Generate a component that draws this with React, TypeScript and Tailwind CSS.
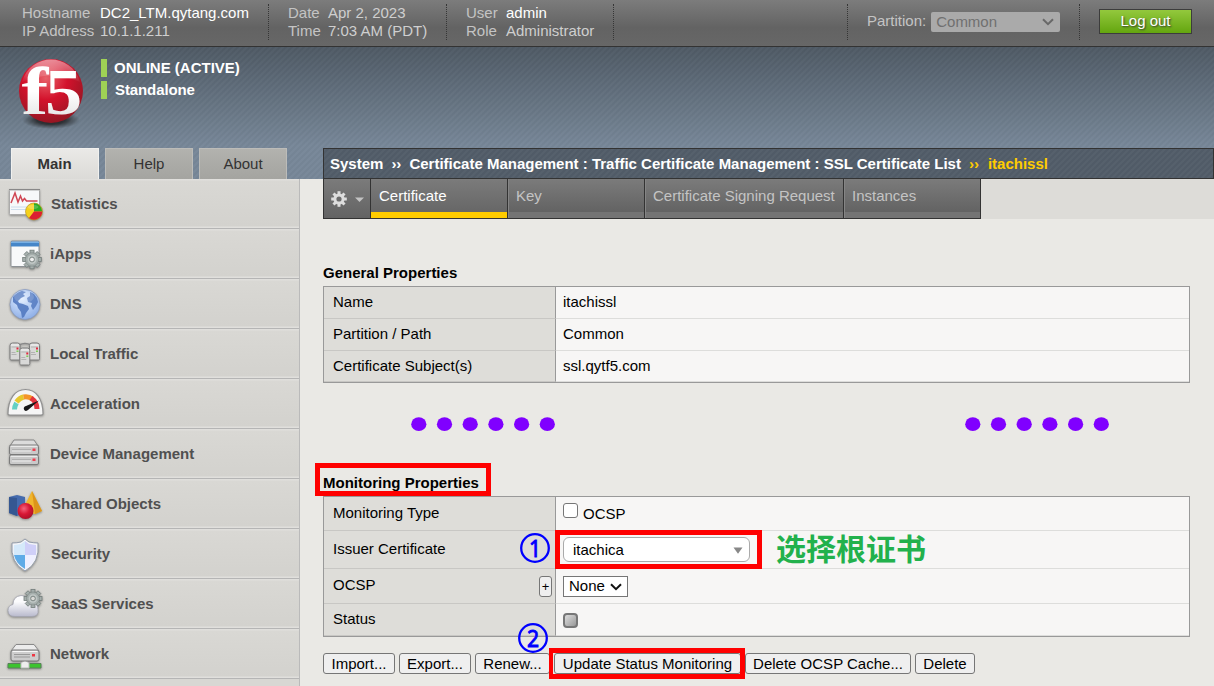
import React from "react";

const Gear = ({ cx, cy, r, fill = "#a5aeac", stroke = "#737d7b", hole = "#d9d9d6" }: { cx: number; cy: number; r: number; fill?: string; stroke?: string; hole?: string }) => (
  <g>
    {[0, 45, 90, 135].map((a) => (
      <rect key={a} x={cx - r * 0.22} y={cy - r} width={r * 0.44} height={r * 2} fill={fill} stroke={stroke} strokeWidth="0.8" transform={`rotate(${a} ${cx} ${cy})`} />
    ))}
    <circle cx={cx} cy={cy} r={r * 0.72} fill={fill} stroke={stroke} strokeWidth="0.5" />
    <circle cx={cx} cy={cy} r={r * 0.48} fill="#c0c7c5" />
    <circle cx={cx} cy={cy} r={r * 0.26} fill={hole} stroke={stroke} strokeWidth="0.9" />
  </g>
);

const Server = ({ x, y }: { x: number; y: number }) => (
  <g>
    <path d={`M${x + 0.5} ${y + 16}V${y + 3}q0-2.500 2.500-2.500h5q2.500 0 2.500 2.500v13q0 1.500-1 1.500h-8q-1 0-1-1.500z`} fill="#d9d9d8" stroke="#7c7c7c" />
    <path d={`M${x + 2} ${y + 4.5}h7M${x + 2} ${y + 10}h4M${x + 2} ${y + 12}h5`} stroke="#aaa" strokeWidth="0.8" />
    <path d={`M${x + 1.5} ${y + 2.5}h8`} stroke="#f4f4f4" />
    <rect x={x + 7} y={y + 5} width="2" height="2" fill="#e4283c" />
    <rect x={x + 7} y={y + 8} width="2" height="1.500" fill="#7ecb5b" />
  </g>
);

const Rack = ({ y }: { y: number }) => (
  <g>
    <rect x="9.500" y={y} width="29" height="9.500" rx="1.500" fill="#c9c9c9" stroke="#7b7b7b" />
    <path d={`M11 ${y + 1.3}h26`} stroke="#f2f2f2" />
    <path d={`M12 ${y + 4.7}h19`} stroke="#aaa" />
    <path d={`M12 ${y + 6}h19`} stroke="#eee" />
    <rect x="32.500" y={y + 3.5} width="3" height="2.500" fill="#ee4050" />
  </g>
);

const icons: Record<string, React.ReactNode> = {
  Statistics: (
    <>
      <rect x="9.500" y="11" width="30" height="24.500" rx="1" fill="#f7f8fa" stroke="#aaa" />
      <path d="M9 10.500h31" stroke="#888" />
      <path d="M11 28h28M11 30.500h28" stroke="#cbdcec" />
      <path d="M11 24l4-10 3 9 2.500-6 2 5 2-2.500 2 2.500h11" fill="none" stroke="#d04654" strokeWidth="1.500" />
      <circle cx="34" cy="32.500" r="8.500" fill="#f5d11b" stroke="#a98822" strokeWidth="0.6" />
      <path d="M34 32.500V24.300a8.200 8.200 0 0 1 8.200 8.200z" fill="#2cab24" />
      <path d="M34 32.500h8.200a8.200 8.200 0 0 1-13.200 6.500z" fill="#db1f31" />
      <ellipse cx="33" cy="28" rx="5.500" ry="2.200" fill="#fff" opacity="0.2" />
    </>
  ),
  iApps: (
    <>
      <rect x="11" y="12" width="28" height="25.500" rx="1" fill="#f8f9fa" stroke="#8d9296" />
      <path d="M11 12.500h28v5H11z" fill="#4686c8" />
      <path d="M11 13.500h28" stroke="#78b0e4" />
      <Gear cx={32} cy={30.500} r={9.300} hole="#eee" />
    </>
  ),
  DNS: (
    <>
      <circle cx="25" cy="25.500" r="15" fill="url(#globe)" stroke="#8598be" strokeWidth="0.8" />
      <path d="M13 18q4-5 9-6l4 1-3 2 2 2-4 2-3 3 1 2 4 1 5 2 1 3-3 4-2 4-2 1-1-6-3-4-1-3-4-3z" fill="#5279c0" opacity="0.9" />
      <path d="M30 13l4 2 3 4 1 4-2 4-3 4-2-4 1-3-4-1-1-4 3-2z" fill="#5279c0" opacity="0.85" />
      <ellipse cx="24" cy="18" rx="10" ry="6" fill="#fff" opacity="0.15" />
    </>
  ),
  "Local Traffic": (
    <>
      <path d="M19 16q6-3 12 0" fill="none" stroke="#888" strokeWidth="1.500" />
      <Server x={9.500} y={13.500} />
      <Server x={29} y={13.500} />
      <Server x={19.300} y={18.500} />
    </>
  ),
  Acceleration: (
    <g transform="translate(0 1)">
      <path d="M8 34C8 19 15 9.500 25.500 9.500S43 19 43 34q0 1-2 1H10q-2 0-2-1z" fill="#f5f5f5" stroke="#909090" strokeWidth="1.200" />
      <path d="M14.500 29.500q0-3 2-6.500" fill="none" stroke="#63d0c4" strokeWidth="5" />
      <path d="M16.500 22q3-4 7-5" fill="none" stroke="#e5c72c" strokeWidth="5" />
      <path d="M23.500 17q5-1 9 2" fill="none" stroke="#f49528" strokeWidth="5" />
      <path d="M31 18q6 4 6 11" fill="none" stroke="#e3343e" strokeWidth="5" />
      <path d="M39 20.500l-11 9.500q-3 2-4-.5t2-3.500z" fill="#171717" />
    </g>
  ),
  "Device Management": (
    <>
      <path d="M10 17l4-6h20l4 6z" fill="#dcdcdc" stroke="#888" />
      <Rack y={16} />
      <Rack y={26} />
    </>
  ),
  "Shared Objects": (
    <>
      <path d="M9 18l8-2 8 2v16l-8 3-8-3z" fill="#456bae" />
      <path d="M9 18l8 1v18l-8-3z" fill="#355792" />
      <path d="M32 12l10 20-7 3-13-3z" fill="#f0b62d" />
      <path d="M32 12l10 20-7 3z" fill="#dc951b" />
      <circle cx="25.500" cy="32" r="8" fill="url(#ball)" />
    </>
  ),
  Security: (
    <g transform="translate(0 1)">
      <path d="M25 9l4 3q5 1 9 1 2 20-13 28Q10 33 12 13q5 0 9-1z" fill="#f4f5f8" stroke="#929ba9" />
      <path d="M25 11l-4 3-7 1q-.5 5 0 10h11z" fill="#d5e9fa" />
      <path d="M25 11l4 3 7 1q.5 5 0 10H25z" fill="#cfcff8" />
      <path d="M14 25h11v14q-9-5-11-14z" fill="#5fabe7" />
      <path d="M36 25H25v14q9-5 11-14z" fill="#eeefff" />
    </g>
  ),
  "SaaS Services": (
    <>
      <path d="M15 37.500q-7 0-7-6 0-5 5-6 0-8 8-9 8 0 9 7 8-1 8 7 1 7-6 7z" fill="url(#cloud)" stroke="#a3a4b0" strokeWidth="0.8" />
      <Gear cx={33} cy={19.500} r={9} />
    </>
  ),
  Network: (
    <>
      <path d="M8 34.500h33v4.500H8z" fill="#3cc32e" stroke="#59805a" />
      <path d="M21 34l4-3 4 3v5h-8z" fill="#eee" stroke="#bbb" />
      <path d="M11 22l5-6.500h18l5 6.500z" fill="#ececec" stroke="#898989" />
      <rect x="11" y="21" width="28" height="11" rx="2" fill="#cdcdcd" stroke="#777" />
      <path d="M12.500 22.500h25" stroke="#f7f7f7" />
      <path d="M14 25.500h16M14 28h16" stroke="#999" />
      <rect x="32" y="25" width="3" height="2.500" fill="#ee3744" />
    </>
  ),
};

const menu: [string, string][] = [
  ["Statistics", "ml-px"],
  ["iApps", ""],
  ["DNS", ""],
  ["Local Traffic", ""],
  ["Acceleration", ""],
  ["Device Management", ""],
  ["Shared Objects", "ml-px"],
  ["Security", "ml-px"],
  ["SaaS Services", "ml-px"],
  ["Network", ""],
];

const Logo = () => (
  <svg width="76" height="76" viewBox="0 0 76 76" className="shrink-0 overflow-visible">
    <defs>
      <radialGradient id="red" cx="0.42" cy="0.3" r="0.75">
        <stop offset="0" stopColor="#e8626a" />
        <stop offset="0.45" stopColor="#d3122c" />
        <stop offset="1" stopColor="#8e1722" />
      </radialGradient>
      <linearGradient id="gloss" x1="0" y1="0" x2="0" y2="1">
        <stop offset="0" stopColor="#fff" stopOpacity="0.5" />
        <stop offset="1" stopColor="#fff" stopOpacity="0.03" />
      </linearGradient>
      <linearGradient id="letter" x1="0" y1="0" x2="0" y2="1">
        <stop offset="0.5" stopColor="#fff" />
        <stop offset="1" stopColor="#dcdcdc" />
      </linearGradient>
      <radialGradient id="shade">
        <stop offset="0" stopColor="#111" stopOpacity="0.9" />
        <stop offset="0.5" stopColor="#151515" stopOpacity="0.7" />
        <stop offset="1" stopColor="#222" stopOpacity="0" />
      </radialGradient>
      <radialGradient id="globe" cx="0.4" cy="0.3" r="0.8">
        <stop offset="0" stopColor="#e0edff" />
        <stop offset="1" stopColor="#84a7e4" />
      </radialGradient>
      <radialGradient id="ball" cx="0.4" cy="0.35" r="0.7">
        <stop offset="0" stopColor="#f4637c" />
        <stop offset="0.5" stopColor="#d81835" />
        <stop offset="1" stopColor="#a90f27" />
      </radialGradient>
      <linearGradient id="cloud" x1="0" y1="0" x2="0" y2="1">
        <stop offset="0.3" stopColor="#fbfbfd" />
        <stop offset="1" stopColor="#b9bacd" />
      </linearGradient>
    </defs>
    <ellipse cx="38" cy="65" rx="29" ry="9" fill="url(#shade)" />
    <circle cx="38" cy="36" r="32" fill="url(#red)" />
    <path d="M9 27C13 12 26 4.500 38 4.500S63 12 67 27Q38 14 9 27z" fill="url(#gloss)" />
    <g fill="url(#letter)" fontFamily="Liberation Serif, serif" fontWeight="700">
      <text transform="translate(8.500 59) scale(1.2 1)" fontSize="67">f</text>
      <text transform="translate(32 59) scale(1.13 1)" fontSize="66">5</text>
    </g>
  </svg>
);

const TopPair = ({ a, b, v, w, cls }: { a: [string, string]; b: [string, string]; v: string; w: string; cls: string }) => (
  <div className={`flex h-9 border-r border-dotted border-[#363636] leading-[18px] ${cls}`}>
    <div className={`shrink-0 text-[#c4c4c4] ${w}`}>
      <div>{a[0]}</div>
      <div>{b[0]}</div>
    </div>
    <div className="text-[#cfcfcf]">
      <div className={v}>{a[1]}</div>
      <div>{b[1]}</div>
    </div>
  </div>
);

const Chevron = ({ color }: { color: string }) => (
  <svg width="12" height="8" viewBox="0 0 12 8">
    <path d="M1 1.200l5 5 5-5" fill="none" stroke={color} strokeWidth="2" />
  </svg>
);

const Row = ({ label, h, children, extra, pad }: { label: string; h: string; pad: string; children?: React.ReactNode; extra?: React.ReactNode }) => (
  <div className={`flex ${h}`}>
    <div className={`flex w-[232px] shrink-0 items-start justify-between border-r border-b border-r-[#999] border-b-[#c8c7c4] bg-[#deddd9] pr-[3px] pl-[9px] leading-[18px] ${pad}`}>
      <span>{label}</span>
      {extra}
    </div>
    <div className="flex grow items-center border-b border-[#dddddb] bg-[#f7f6f5] pl-[7px]">{children}</div>
  </div>
);

const Btn = ({ children, w }: { children: React.ReactNode; w: string }) => (
  <button className={`h-[21px] shrink-0 rounded-[3px] border border-[#767676] bg-[#efefef] text-center leading-[19px] whitespace-nowrap ${w}`}>{children}</button>
);

const Dots = ({ x }: { x: string }) => (
  <svg className={`absolute top-[417px] ${x}`} width="150" height="15" viewBox="0 0 150 15">
    {[0, 1, 2, 3, 4, 5].map((i) => (
      <ellipse key={i} cx={7.8 + i * 25.7} cy="7.200" rx="7.600" ry="6.900" fill="#8000ff" />
    ))}
  </svg>
);

const Step = ({ n, pos }: { n: string; pos: string }) => (
  <svg className={`absolute overflow-visible ${pos}`} width="30" height="30" viewBox="0 0 30 30">
    <circle cx="15" cy="15" r="13.800" fill="none" stroke="#0000ff" strokeWidth="2.300" />
    <text transform="translate(15 23.500) scale(0.88 1)" textAnchor="middle" fontFamily="Noto Sans, sans-serif" fontSize="24" fill="#0000ff" stroke="#0000ff" strokeWidth="0.9">{n}</text>
  </svg>
);

const navTab = "shrink-0 border-r border-b border-[#333] bg-[linear-gradient(#7b7b7b,#636363_84%,#747474_84%)] shadow-[inset_1px_0_0_#858585] pt-[7px] pl-[8px] leading-[20px] whitespace-nowrap text-[#c4c4c4]";

export default function App() {
  return (
    <div className="relative h-[686px] w-[1214px] overflow-hidden bg-[#eae9e5] font-['Liberation_Sans',Arial,sans-serif] text-[15px] text-black">
      <header className="flex h-[47px] items-start border-b border-[#333] bg-[linear-gradient(#7c7c7c,#636363_60%,#676767)] pt-1">
        <TopPair a={["Hostname", "DC2_LTM.qytang.com"]} b={["IP Address", "10.1.1.211"]} v="text-white" w="w-[78px]" cls="w-[269px] pl-[22px]" />
        <TopPair a={["Date", "Apr 2, 2023"]} b={["Time", "7:03 AM (PDT)"]} v="" w="w-[40px]" cls="w-[178px] pl-[19px]" />
        <TopPair a={["User", "admin"]} b={["Role", "Administrator"]} v="text-white" w="w-[40px]" cls="w-[167px] pl-[19px]" />
        <div className="ml-auto flex h-9 w-[233px] items-center border-x border-dotted border-[#363636] pl-[19px] text-[#c4c4c4]">
          <span className="pb-px">Partition:</span>
          <div className="ml-[5px] flex h-[20px] w-[129px] items-center justify-between rounded-[2px] bg-[#aaa] pr-[6px] pl-[5px] text-[#707070]">
            Common
            <Chevron color="#686868" />
          </div>
        </div>
        <button className="mt-[5px] mr-[22px] ml-[19px] h-[25px] w-[93px] border border-[#3c3c3c] bg-[linear-gradient(#93c83d,#64a60f)] pb-[2px] leading-[20px] text-white [text-shadow:1px_1px_2px_#333]">Log out</button>
      </header>

      <div className="flex h-[639px] bg-[repeating-linear-gradient(135deg,rgba(255,255,255,0.018)_0_2.12px,rgba(0,0,0,0.018)_2.12px_4.24px),linear-gradient(#4f5a65,#778798_75%)] bg-[length:100%_132px] bg-no-repeat">
        <aside className="flex w-[300px] shrink-0 flex-col">
          <div className="flex h-[101px] pt-[8px] pl-[13px]">
            <Logo />
            <div className="ml-[12px] flex flex-col gap-1 pt-[4px] font-bold text-white">
              <div className="h-[18px] border-l-[6px] border-[#9fd155] pl-[7px] leading-[18px]">ONLINE (ACTIVE)</div>
              <div className="h-[18px] border-l-[6px] border-[#9fd155] pl-[8px] leading-[18px] tracking-[-0.1px]">Standalone</div>
            </div>
          </div>
          <div className="flex h-[31px] gap-[6px] pl-[11px] text-center leading-[30px] text-[#333]">
            <div className="w-[88px] border border-b-0 border-[#f1f1ef] bg-[linear-gradient(#eae9e7,#dbdad7)] pr-px font-bold">Main</div>
            <div className="w-[88px] border border-b-0 border-[#bcbcb9] bg-[linear-gradient(#b2b2ae,#a4a4a0)]">Help</div>
            <div className="w-[88px] border border-b-0 border-[#bcbcb9] bg-[linear-gradient(#b2b2ae,#a4a4a0)]">About</div>
          </div>
          <nav className="h-[507px] overflow-hidden border-r border-[#bababa] bg-[#d8d7d3]">
            {menu.map(([name, cls]) => (
              <div key={name} className="flex h-[50px] items-center border-b border-[#b5b5b5] bg-[linear-gradient(#e0dfdc_0_1px,#d9d8d4_2px,#d3d2ce_47px,#e0dfdc_48px)] font-bold text-[#505050]">
                <svg width="50" height="50" viewBox="0 0 50 50" className="shrink-0 drop-shadow-[0_1px_1px_rgba(0,0,0,0.35)]">{icons[name]}</svg>
                <span className={`leading-[18px] ${cls}`}>{name}</span>
              </div>
            ))}
          </nav>
        </aside>

        <main className="flex w-[914px] flex-col pt-[101px] pl-[23px]">
          <div className="flex h-[31px] items-center border border-[#333] bg-[#535e6a] bg-[repeating-linear-gradient(135deg,rgba(255,255,255,0.015)_0_2.12px,rgba(0,0,0,0.03)_2.12px_4.24px)] pt-[2px] pl-[6px] font-bold whitespace-pre text-white">
            <span>System</span>
            <span className="ml-[8px]">››</span>
            <span className="ml-[8px]">Certificate Management : Traffic Certificate Management : SSL Certificate List</span>
            <span className="ml-[8px] text-[#fc0]">››</span>
            <span className="ml-[9px] text-[#fc0]">itachissl</span>
          </div>
          <div className="flex h-[40px] bg-[#dddcd8]">
            <div className="flex w-[48px] shrink-0 items-center gap-[8px] border-x border-b border-[#333] bg-[linear-gradient(#7b7b7b,#636363)] pl-[7px]">
              <svg width="16" height="16" viewBox="0 0 16 16">
                <g fill="#ddd">
                  {[0, 45, 90, 135].map((a) => (
                    <rect key={a} x="6.500" y="0.200" width="3" height="15.600" transform={`rotate(${a} 8 8)`} />
                  ))}
                </g>
                <circle cx="8" cy="8" r="4.100" fill="#6c6c6c" stroke="#ddd" strokeWidth="3" />
              </svg>
              <svg width="9" height="6" viewBox="0 0 9 6" className="mt-[3px]">
                <path d="M0 0.500h9L4.500 5z" fill="#c4c4c4" />
              </svg>
            </div>
            <div className="w-[137px] shrink-0 border-r border-b border-[#333] bg-[linear-gradient(#7b7b7b,#636363)]">
              <div className="h-[39px] border-b-[6px] border-[#fc0] pt-[7px] pl-[8px] leading-[20px] text-white">Certificate</div>
            </div>
            <div className={`w-[137px] ${navTab}`}>Key</div>
            <div className={`w-[199px] ${navTab}`}>Certificate Signing Request</div>
            <div className={`w-[137px] ${navTab}`}>Instances</div>
          </div>

          <h2 className="mt-[45px] h-[22px] leading-[18px] font-bold">General Properties</h2>
          <section className="w-[867px] border border-[#999]">
            <Row label="Name" h="h-[32px]" pad="pt-[6px]">itachissl</Row>
            <Row label="Partition / Path" h="h-[32px]" pad="pt-[6px]">Common</Row>
            <Row label="Certificate Subject(s)" h="h-[31px]" pad="pt-[6px]">ssl.qytf5.com</Row>
          </section>

          <h2 className="mt-[91px] h-[22px] leading-[18px] font-bold">Monitoring Properties</h2>
          <section className="w-[867px] border border-[#999]">
            <Row label="Monitoring Type" h="h-[34px]" pad="pt-[7px]">
              <span className="mb-[6px] h-[15px] w-[15px] rounded-[3px] border-[1.5px] border-[#767676] bg-white" />
              <span className="ml-[5px] pt-[1px]">OCSP</span>
            </Row>
            <Row label="Issuer Certificate" h="h-[38px]" pad="pt-[9px]">
              <div className="flex h-[25px] w-[187px] items-center justify-between rounded-[6px] border border-[#aaa] bg-white pt-px pr-[6px] pl-[9px]">
                itachica
                <svg width="10" height="7" viewBox="0 0 10 7">
                  <path d="M0.500 0.500h9L5 6.800z" fill="#888" />
                </svg>
              </div>
            </Row>
            <Row
              label="OCSP"
              h="h-[35px]"
              pad="pt-[7px]"
              extra={<button className="h-[21px] w-[13px] rounded-[3px] border border-[#767676] bg-[#efefef] text-[13px] leading-[18px]">+</button>}
            >
              <div className="mt-[1px] flex h-[21px] w-[65px] items-center justify-between border border-[#767676] bg-white pr-[5px] pl-[5px]">
                None
                <Chevron color="#111" />
              </div>
            </Row>
            <Row label="Status" h="h-[32px]" pad="pt-[6px]">
              <span className="mt-[2px] h-[15px] w-[15px] rounded-[4px] border-2 border-[#777] bg-[linear-gradient(135deg,#ddd,#999)]" />
            </Row>
          </section>

          <div className="mt-[16px] flex gap-1">
            <Btn w="w-[72px]">Import...</Btn>
            <Btn w="w-[72px]">Export...</Btn>
            <Btn w="w-[75px]">Renew...</Btn>
            <Btn w="w-[187px]">Update Status Monitoring</Btn>
            <Btn w="w-[166px]">Delete OCSP Cache...</Btn>
            <Btn w="w-[60px]">Delete</Btn>
          </div>
        </main>
      </div>

      <Dots x="left-[411px]" />
      <Dots x="left-[965px]" />
      <div className="absolute top-[463px] left-[315px] h-[33px] w-[176px] border-[5px] border-[#f00]" />
      <div className="absolute top-[530px] left-[555px] h-[39px] w-[207px] border-[5px] border-[#f00]" />
      <div className="absolute top-[648px] left-[549px] h-[31px] w-[196px] border-[5px] border-l-4 border-[#f00]" />
      <Step n="1" pos="left-[520px] top-[533px]" />
      <Step n="2" pos="left-[518px] top-[623px]" />
      <div className="absolute top-[525px] left-[776px] font-['Noto_Sans_CJK_SC',sans-serif] text-[30px] leading-[44px] font-bold whitespace-nowrap text-[#22b14c]">选择根证书</div>
    </div>
  );
}
